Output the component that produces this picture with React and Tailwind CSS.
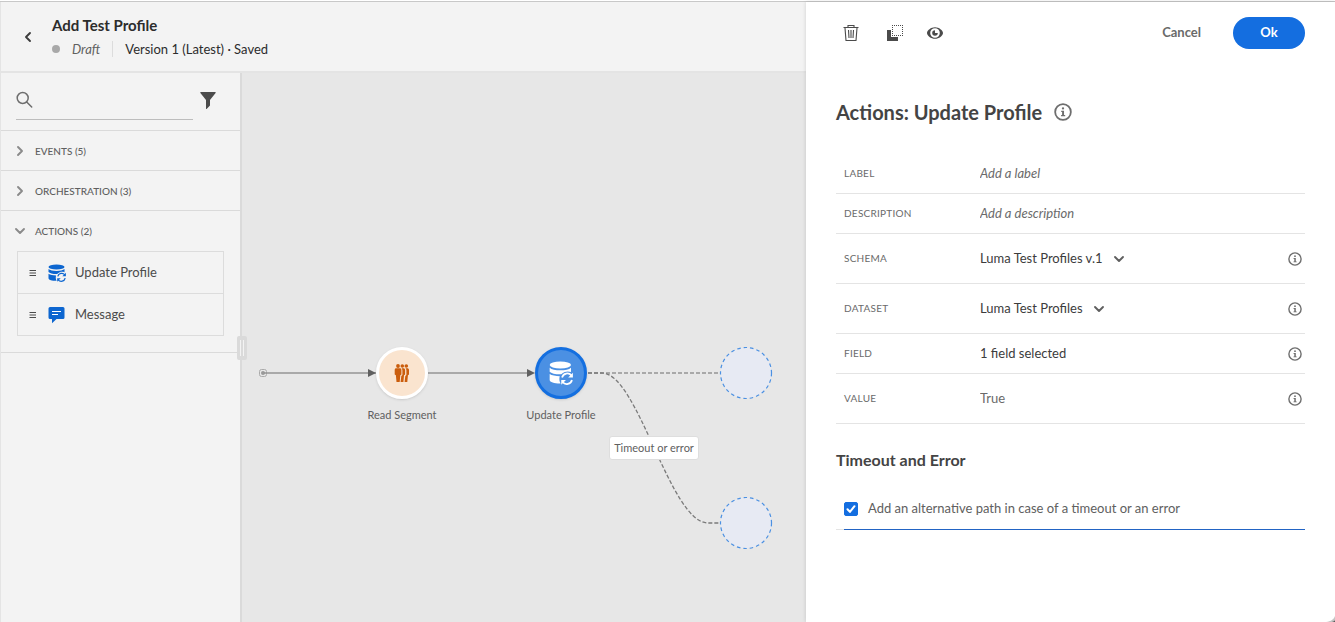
import React, { useState } from "react";

function Chevron({ direction = "right", className = "" }) {
  const paths = {
    right: "M4 2 8 6 4 10",
    left: "M8 2 4 6 8 10",
    down: "M2 4 6 8 10 4",
  };
  return (
    <svg viewBox="0 0 12 12" className={"size-3 shrink-0 " + className} fill="none" stroke="currentColor" strokeWidth="1.9" strokeLinecap="round" strokeLinejoin="round" aria-hidden="true">
      <path d={paths[direction]} />
    </svg>
  );
}

function InfoIcon({ className = "size-3.5" }) {
  return (
    <svg viewBox="0 0 14 14" className={"shrink-0 text-[#6e6e6e] " + className} fill="none" aria-hidden="true">
      <circle cx="7" cy="7" r="6.1" stroke="currentColor" strokeWidth="1.4" />
      <circle cx="7" cy="4.2" r="0.9" fill="currentColor" />
      <path d="M5.6 6h2.200v3.400h.9v.9H5.500v-.9h.8V7h-.7z" fill="currentColor" />
    </svg>
  );
}

function DatabaseIcon({ className = "" }) {
  return (
    <svg viewBox="0 0 18 18" className={"shrink-0 " + className} fill="currentColor" aria-hidden="true">
      <ellipse cx="8.5" cy="3" rx="8" ry="2.6" />
      <path d="M.5 5c1.4 1.3 4.5 2 8 2s6.600-.7 8-2v3.200c-1.400-.5-3.200-.6-4.700 0-1 .4-1.900 1-2.600 1.800C5.500 10.200 1.700 9.300.5 8z" />
      <path d="M.5 9.800c1.600 1.100 4.500 1.600 7.600 1.600-.6 1.800-.4 3.800.6 5.400C4.500 16.900.5 16 .5 14.200z" />
      <path d="M9.800 12.400a4 4 0 0 1 7-1.600" fill="none" stroke="currentColor" strokeWidth="1.300" />
      <path d="M17.900 8.800v3.500h-3.500z" />
      <path d="M17.200 14.200a4 4 0 0 1-7 1.600" fill="none" stroke="currentColor" strokeWidth="1.300" />
      <path d="M9.200 17.800v-3.500h3.500z" />
    </svg>
  );
}

function MessageIcon() {
  return (
    <svg viewBox="0 0 18 18" className="size-[18px] shrink-0" aria-hidden="true">
      <path d="M2 1h13a1.500 1.500 0 0 1 1.500 1.500v9A1.500 1.500 0 0 1 15 13H8.500L4 17.300V13H2A1.500 1.500 0 0 1 .5 11.500v-9A1.500 1.500 0 0 1 2 1z" fill="#0d66d0" />
      <path d="M4 5.500h9M4 8.500h6" stroke="#fff" strokeWidth="1" />
    </svg>
  );
}

function PeopleIcon() {
  return (
    <svg viewBox="0 0 16 18" className="h-[18px] w-4" fill="#cb5d0c" aria-hidden="true">
      <circle cx="4" cy="2" r="1.900" />
      <circle cx="8.300" cy="2" r="1.800" />
      <circle cx="12.300" cy="2" r="1.800" />
      <path d="M2.200 4.200h3.600c1 0 1.600.7 1.600 1.700v4.600l-1.100.8L5.700 18H2.500l-.6-6.700-1.200-.8V5.900c0-1 .6-1.700 1.500-1.700z" />
      <path d="M7.600 4.200h1.700c1 0 1.800.7 1.800 1.700v4.600l-1.100.8L9.400 18H6.600l.7-6 1.100-1V6.200c0-.8-.3-1.500-.8-2z" />
      <path d="M11.500 4.200h1.700c1 0 1.800.7 1.800 1.700v4.600l-1.100.8-.6 6.700h-2.700l.7-6 1.100-1V6.200c0-.8-.3-1.500-.9-2z" />
    </svg>
  );
}

const sectionClass = "flex h-10 w-full items-center gap-[9px] border-t border-[#dadada] pt-px pl-[13px] text-left text-[10px] font-medium text-[#5f5f5f]";

function PaletteItem({ icon, label }) {
  return (
    <li className="flex h-[42px] items-center border-b border-[#dcdcdc] pl-[11px] text-[13px] text-[#4b4b4b]">
      <svg viewBox="0 0 8 8" className="mr-[11px] size-2" stroke="#4b4b4b" aria-hidden="true">
        <path d="M0.500 1.500h6.500M0.500 4h6.500M0.500 6.500h6.500" />
      </svg>
      {icon}
      <span className="ml-[9px]">{label}</span>
    </li>
  );
}

function Sidebar() {
  return (
    <aside className="relative w-[242px] shrink-0 border-r-2 border-l border-r-[#dadada] border-l-[#e4e4e4] bg-[#f3f3f3]">
      <div className="flex h-[57px] items-start justify-between pt-4 pr-6 pl-[15px]">
        <label className="flex h-[31px] w-[177px] items-center border-b border-[#bdbdbd] pb-2">
          <svg viewBox="0 0 18 18" className="size-[18px] shrink-0" fill="none" stroke="#6e6e6e" strokeWidth="1.500" aria-hidden="true">
            <circle cx="6.700" cy="7" r="5.500" />
            <path d="m10.700 11 5 5" strokeLinecap="round" />
          </svg>
          <input type="search" aria-label="Search" className="min-w-0 flex-1 bg-transparent px-2 text-[13px] outline-none" />
        </label>
        <button type="button" aria-label="Filter" className="mt-[3px]">
          <svg viewBox="0 0 16 17" className="h-[17px] w-4" fill="#4b4b4b" aria-hidden="true">
            <path d="M.8 0h14.400c.5 0 .7.500.4.900L10 8v5.600L6.600 17a.4.400 0 0 1-.6-.3V8L.4.900C.1.500.3 0 .8 0z" />
          </svg>
        </button>
      </div>
      <button type="button" className={sectionClass}>
        <Chevron className="text-[#8a8a8a]" />EVENTS (5)
      </button>
      <button type="button" className={sectionClass}>
        <Chevron className="text-[#8a8a8a]" />ORCHESTRATION (3)
      </button>
      <section className="border-b border-[#dadada] pb-4">
        <button type="button" className={sectionClass}>
          <Chevron direction="down" className="text-[#8a8a8a]" />ACTIONS (2)
        </button>
        <ul className="mx-4 mt-px border-x border-t border-[#dcdcdc]">
          <PaletteItem icon={<DatabaseIcon className="size-[18px] text-[#0d66d0]" />} label="Update Profile" />
          <PaletteItem icon={<MessageIcon />} label="Message" />
        </ul>
      </section>
      <div className="absolute top-[263px] -right-[7px] z-10 flex h-6 w-[10px] items-center justify-center gap-[2px] rounded-[2px] bg-[#dadada]">
        <span className="h-4 w-px bg-[#f3f3f3]" />
        <span className="h-4 w-px bg-[#f3f3f3]" />
      </div>
    </aside>
  );
}

function Canvas() {
  return (
    <main className="relative min-w-0 flex-1 overflow-hidden bg-[#e7e7e7]">
      <svg viewBox="0 0 564 549" className="absolute top-0 left-0 h-[549px] w-[564px]" fill="none" aria-hidden="true">
        <rect x="17.500" y="296.500" width="7" height="7" rx="2" stroke="#aaa" />
        <circle cx="21" cy="300" r="2" fill="#999" />
        <path d="M22 300h112M186 300h101" stroke="#959595" strokeWidth="1.500" />
        <path d="M126 296v8l8-4zM285 296v8l8-4z" fill="#606060" />
        <path d="M346 300h132" stroke="#959595" strokeWidth="1.500" strokeDasharray="4 2" />
        <path d="M346 300h14C396 300 428 450 466 450h12" stroke="#7b7b7b" strokeWidth="1.300" strokeDasharray="4 2" />
        <circle cx="504" cy="300" r="25.500" fill="#e7eaf3" stroke="#4b90e2" strokeWidth="1.200" strokeDasharray="3.500 3" />
        <circle cx="504" cy="450" r="25.500" fill="#e7eaf3" stroke="#4b90e2" strokeWidth="1.200" strokeDasharray="3.500 3" />
      </svg>
      <div className="absolute top-[274px] left-[110px] flex w-[100px] flex-col items-center">
        <div className="flex size-[52px] items-center justify-center rounded-full border-[3px] border-white bg-[#fae4cf] shadow-sm">
          <PeopleIcon />
        </div>
        <span className="mt-2 text-[11px] leading-4 text-[#606060]">Read Segment</span>
      </div>
      <div className="absolute top-[274px] left-[269px] flex w-[100px] flex-col items-center">
        <div className="flex size-[52px] items-center justify-center rounded-full border-[3px] border-[#146fe0] bg-[#4b90e3] shadow-sm">
          <DatabaseIcon className="size-6 text-white" />
        </div>
        <span className="mt-2 text-[11px] leading-4 text-[#606060]">Update Profile</span>
      </div>
      <div className="absolute top-[363px] left-[367px] flex h-6 w-[90px] items-center justify-center rounded-[3px] border border-[#dedede] bg-white text-[11px] whitespace-nowrap text-[#606060]">
        Timeout or error
      </div>
    </main>
  );
}

const labelClass = "w-[136px] shrink-0 text-[10px] tracking-wide text-[#6a6a6a] uppercase";

function Field({ id, label, tall, info, children }) {
  return (
    <div className={"flex items-center border-b border-[#e4e4e4] pr-[3px] pl-2 " + (tall ? "h-[50px]" : "h-10")}>
      <label htmlFor={id} className={labelClass}>{label}</label>
      <div className="flex min-w-0 flex-1 items-center text-[13px] text-[#4b4b4b]">{children}</div>
      {info && (
        <button type="button" aria-label={"About " + label}>
          <InfoIcon />
        </button>
      )}
    </div>
  );
}

function Select({ id, value }) {
  return (
    <div className="relative flex items-center">
      <select id={id} defaultValue={value} className="field-sizing-content appearance-none bg-transparent pr-[22px] text-[#3c3c3c] outline-none">
        <option>{value}</option>
      </select>
      <Chevron direction="down" className="pointer-events-none absolute right-0 text-[#5f5f5f]" />
    </div>
  );
}

function Panel() {
  const [alternative, setAlternative] = useState(true);
  const inputClass = "w-full bg-transparent outline-none placeholder:text-[#6a6a6a] placeholder:italic";
  return (
    <section className="relative z-20 w-[529px] shrink-0 bg-white pr-[30px] pl-[30px] shadow-[0_0_4px_rgba(0,0,0,0.15)]">
      <div className="flex h-[62px] items-center">
        <div className="flex flex-1 items-center gap-6 pl-[6px]">
          <button type="button" aria-label="Delete">
            <svg viewBox="0 0 18 18" className="size-[18px]" fill="none" stroke="#4b4b4b" strokeWidth="1.100" aria-hidden="true">
              <path d="M1.500 3.500h15M6 3V1.500h6V3M3 4l1 12.500h10L15 4M6.500 6l.5 8M9 6v8M11.500 6 11 14" />
            </svg>
          </button>
          <button type="button" aria-label="Duplicate">
            <svg viewBox="0 0 18 18" className="size-[18px] overflow-visible" aria-hidden="true">
              <path d="M3 6h4v7h7v4H3z" fill="#4b4b4b" />
              <path d="M8 1.500h11M8 11.500h11M8.500 3v8M18.500 3v8" fill="none" stroke="#4b4b4b" strokeDasharray="1 1" />
            </svg>
          </button>
          <button type="button" aria-label="Preview">
            <svg viewBox="0 0 18 18" className="size-[18px]" aria-hidden="true">
              <path d="M9 3.200c-4 0-8 3.100-8 5.800s4 5.800 8 5.800 8-3.100 8-5.800-4-5.800-8-5.800zm0 10.600a4.800 4.800 0 1 1 0-9.600 4.800 4.800 0 0 1 0 9.600z" fill="#4b4b4b" />
              <path d="M9 6.200a2.800 2.800 0 1 0 2.800 2.800H9z" fill="#4b4b4b" />
            </svg>
          </button>
        </div>
        <button type="button" className="mr-8 text-[13px] font-bold text-[#6a6a6a]">Cancel</button>
        <button type="button" className="h-8 w-[72px] rounded-full bg-[#146ee0] text-[13px] font-bold text-white">Ok</button>
      </div>
      <div className="mt-8 flex h-8 items-center gap-3">
        <h1 className="text-[20px] leading-8 font-bold text-[#444]">Actions: Update Profile</h1>
        <button type="button" aria-label="About this action">
          <InfoIcon className="size-[18px]" />
        </button>
      </div>
      <form className="mt-[26px]">
        <Field id="label" label="Label">
          <input id="label" placeholder="Add a label" className={inputClass} />
        </Field>
        <Field id="description" label="Description">
          <input id="description" placeholder="Add a description" className={inputClass} />
        </Field>
        <Field id="schema" label="Schema" tall info>
          <Select id="schema" value="Luma Test Profiles v.1" />
        </Field>
        <Field id="dataset" label="Dataset" tall info>
          <Select id="dataset" value="Luma Test Profiles" />
        </Field>
        <Field id="field" label="Field" info>
          <button id="field" type="button" className="text-[#3c3c3c]">1 field selected</button>
        </Field>
        <Field id="value" label="Value" tall info>
          <input id="value" defaultValue="True" className={inputClass + " text-[#6a6a6a]"} />
        </Field>
        <h2 className="mt-6 text-[16px] leading-6 font-bold text-[#444]">Timeout and Error</h2>
        <div className="mt-4 flex border-b border-[#e4e4e4] pl-2">
          <label className="-mb-px flex h-[42px] flex-1 items-center gap-[10px] border-b border-[#2264c4] text-[13px] text-[#606060]">
            <span className="grid size-[14px] place-items-center">
              <input
                type="checkbox"
                checked={alternative}
                onChange={(e) => setAlternative(e.target.checked)}
                className="peer col-start-1 row-start-1 size-[14px] appearance-none rounded-[2px] border border-[#6e6e6e] checked:border-[#146ee0] checked:bg-[#146ee0]"
              />
              <svg viewBox="0 0 14 14" className="pointer-events-none invisible col-start-1 row-start-1 size-[14px] peer-checked:visible" fill="none" stroke="#fff" strokeWidth="2" strokeLinecap="round" strokeLinejoin="round" aria-hidden="true">
                <path d="m3.500 7.300 2.400 2.600 4.600-5.700" />
              </svg>
            </span>
            Add an alternative path in case of a timeout or an error
          </label>
        </div>
      </form>
      <svg viewBox="0 0 9 6" className="absolute right-0 bottom-0 h-[6px] w-[9px]" aria-hidden="true">
        <path d="M0 6C5 5.500 8 3 9 0v6z" fill="#c4c4c4" />
        <path d="M6 6c2-.5 2.500-1 3-2v2z" fill="#555" />
      </svg>
    </section>
  );
}

export default function App() {
  return (
    <div className="flex min-h-screen flex-col bg-white pt-px font-['Lato',sans-serif] text-[#2c2c2c]">
      <div className="flex flex-1 border-t border-[#c8c8c8]">
        <div className="flex min-w-0 flex-1 flex-col">
          <header className="flex h-[71px] items-center border-b-2 border-l border-b-[#e4e4e4] border-l-[#e4e4e4] bg-[#f3f3f3] pl-[21px]">
            <button type="button" aria-label="Back" className="mr-[18px]">
              <Chevron direction="left" className="text-[#3c3c3c]" />
            </button>
            <div>
              <div className="text-[15px] leading-6 font-bold">Add Test Profile</div>
              <div className="flex items-center text-[13px] leading-6">
                <span className="mr-3 size-2 rounded-full bg-[#a8a8a8]" />
                <span className="mr-3 text-[#606060] italic">Draft</span>
                <span className="mr-3 h-4 w-px bg-[#dcdcdc]" />
                <span>Version 1 (Latest) · Saved</span>
              </div>
            </div>
          </header>
          <div className="flex flex-1">
            <Sidebar />
            <Canvas />
          </div>
        </div>
        <Panel />
      </div>
    </div>
  );
}
